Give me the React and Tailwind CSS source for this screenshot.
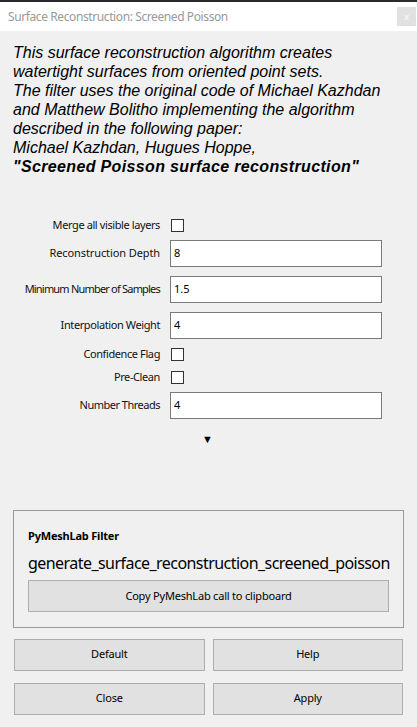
import React from 'react'

const ui = { fontFamily: '"Noto Sans", "Open Sans", sans-serif' }
const desc = { fontFamily: '"Liberation Sans", Arial, sans-serif' }

function CheckRow({ label, className = '' }) {
  return (
    <div className={`flex items-center h-[20px] ${className}`}>
      <div className="w-[170px] text-right pr-[10px] text-[11px] text-[#111] whitespace-nowrap tracking-[-0.4px]">{label}</div>
      <div className="w-[13px] h-[13px] border border-[#333] bg-white ml-[1px]" />
    </div>
  )
}

function InputRow({ label, value, track = 'tracking-[-0.4px]' }) {
  return (
    <div className="flex items-center h-[36px]">
      <div className={`w-[170px] text-right pr-[10px] text-[11px] text-[#111] whitespace-nowrap ${track}`}>{label}</div>
      <div className="w-[212px] h-[27px] border border-[#7a7a7a] bg-white flex items-center px-[3px] text-[11px] text-black">{value}</div>
    </div>
  )
}

function Btn({ children, className = '' }) {
  return (
    <div className={`h-[32px] bg-[#e1e1e1] border border-[#adadad] flex items-center justify-center text-[11px] text-black tracking-[-0.2px] ${className}`}>{children}</div>
  )
}

export default function App() {
  return (
    <div className="w-[417px] h-[727px] flex flex-col bg-[#f0f0f0] overflow-hidden" style={ui}>
      <div className="h-[2px] bg-[#2b2b2f]" />
      <div className="h-[29px] bg-white flex items-center justify-between pl-[8px] pr-[1px]">
        <span className="text-[12px] text-[#999] tracking-[-0.4px]">Surface Reconstruction: Screened Poisson</span>
        <div className="w-[19px] h-[19px] bg-[#e1e1e1] flex items-center justify-center text-[9px] text-[#f4f4f4] font-bold">x</div>
      </div>
      <div className="px-[13px] pt-[12px] text-[16px] leading-[19px] italic text-black" style={desc}>
        <div>This surface reconstruction algorithm creates</div>
        <div>watertight surfaces from oriented point sets.</div>
        <div>The filter uses the original code of Michael Kazhdan</div>
        <div>and Matthew Bolitho implementing the algorithm</div>
        <div>described in the following paper:</div>
        <div>Michael Kazhdan, Hugues Hoppe,</div>
        <div className="font-bold tracking-[0.35px]">"Screened Poisson surface reconstruction"</div>
      </div>
      <div className="mt-[39px] flex flex-col">
        <CheckRow label="Merge all visible layers" />
        <InputRow label="Reconstruction Depth" value="8" track="tracking-[-0.1px]" />
        <InputRow label="Minimum Number of Samples" value="1.5" track="tracking-[-0.8px]" />
        <InputRow label="Interpolation Weight" value="4" />
        <CheckRow label="Confidence Flag" className="mt-[1px]" />
        <CheckRow label="Pre-Clean" className="mt-[3px]" />
        <InputRow label="Number Threads" value="4" track="tracking-[-0.5px]" />
      </div>
      <div className="flex justify-center mt-[8px] pr-[2px] text-[11px] text-black">▼</div>
      <div className="mx-[13px] mt-[62px] h-[118px] border border-[#999] px-[14px] pt-[17px]">
        <div className="text-[11px] font-bold text-black tracking-[-0.2px]">PyMeshLab Filter</div>
        <div className="mt-[7px] text-[16px] text-black tracking-[-0.55px] whitespace-nowrap">generate_surface_reconstruction_screened_poisson</div>
        <Btn className="mt-[5px]">Copy PyMeshLab call to clipboard</Btn>
      </div>
      <div className="grid grid-cols-2 gap-x-[8px] gap-y-[12px] px-[14px] mt-[11px]">
        <Btn>Default</Btn>
        <Btn>Help</Btn>
        <Btn>Close</Btn>
        <Btn>Apply</Btn>
      </div>
    </div>
  )
}
